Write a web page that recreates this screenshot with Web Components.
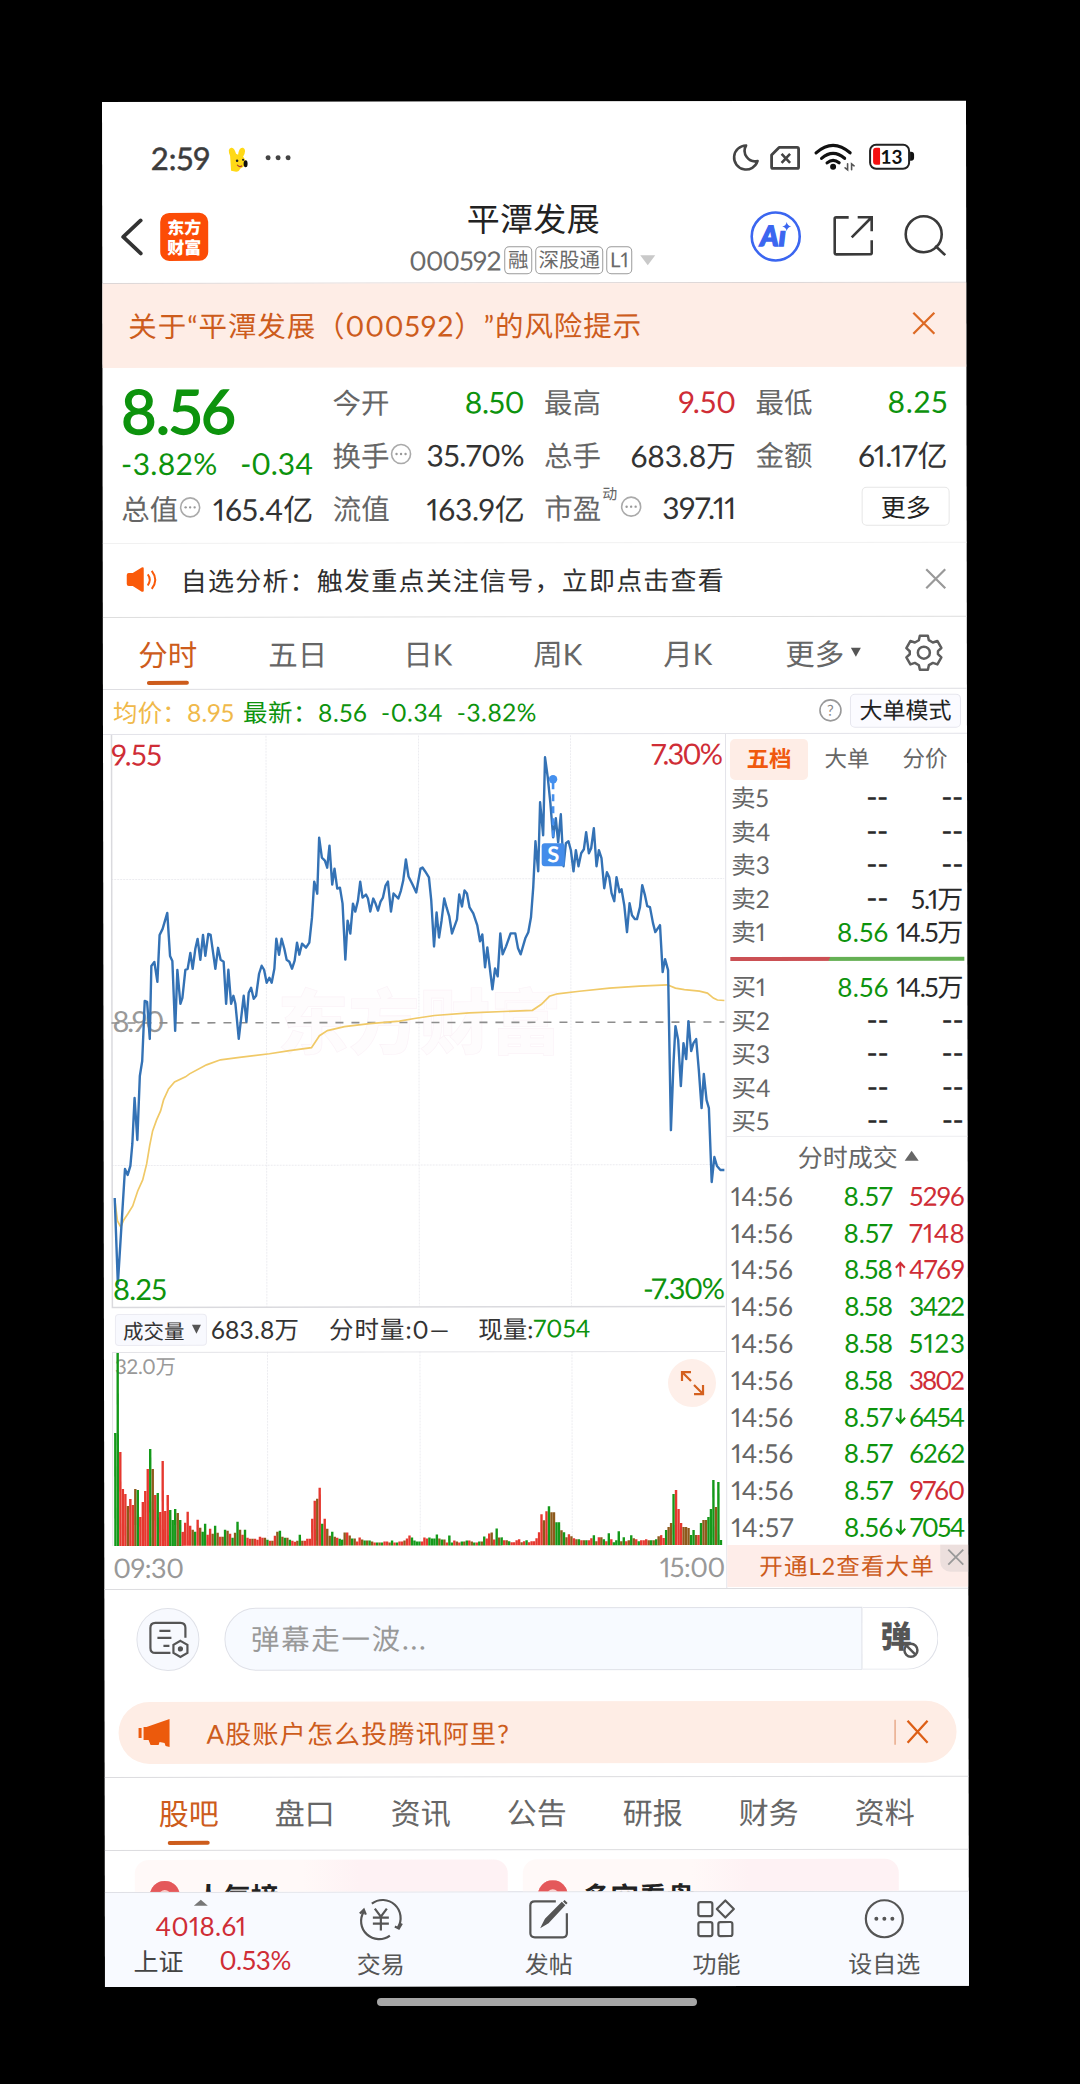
<!DOCTYPE html>
<html lang="zh-CN">
<head>
<meta charset="utf-8">
<title>平潭发展 000592</title>
<style>
  html, body {
    margin: 0;
    background: #000;
  }
  body {
    width: 1080px;
    height: 2084px;
    overflow: hidden;
    font-family: Lato, "Noto Sans CJK SC", sans-serif;
    font-variant-numeric: proportional-nums;
    text-spacing-trim: space-all;
    color: #333;
  }
</style>
</head>
<body>
<stock-app></stock-app>
<script>
// Text that spreads its letters over the width given in "w"
class FitText extends HTMLElement {

    constructor() {
      super();
      this.attachShadow({ mode: "open" });
      this.shadowRoot.innerHTML = /*html*/`
        <style>
          :host { display: inline-block; white-space: nowrap; flex: none; }
          span { display: inline-block; }
        </style>
        <span><slot></slot></span>
      `;
    }

    connectedCallback() {
      const w = Number(this.getAttribute('w'));
      const span = this.shadowRoot.querySelector('span');
      const n = this.textContent.length;
      if (!w || n < 2) return;
      const gap = (w - span.offsetWidth) / (n - 1);
      span.style.letterSpacing = gap + 'px';
      span.style.marginRight = -gap + 'px';
    }
}

// Base of the sections: paints styles and markup once
class Section extends HTMLElement {

    constructor() {
      super();
      this.attachShadow({ mode: "open" });
    }

    connectedCallback() {
      this.shadowRoot.innerHTML = `<style>
          :host { display: block; box-sizing: border-box; }
          * { box-sizing: border-box; }
          svg { display: block; flex: none; overflow: visible; }
          .up { color: #cf2d36; }
          .down { color: #0d930d; }
          ${this.constructor.styles}
        </style>${this.html()}`;
    }
}

class StatusBar extends Section {
    html() {
      return /*html*/`
        <fit-text class="time" w="59">2:59</fit-text>
        <svg class="pet" width="20" height="25" viewBox="0 0 20 25">
          <path d="M3 24 2 9Q-1 2 3 1q3-1 5 6l2 1q1-8 5-7 4 2 0 9 3 3 2 8-2 3-5 4-1 3-4 3z" fill="#ffd916"/>
          <ellipse cx="17.500" cy="17" rx="2" ry="3.500" fill="#111"/>
          <circle cx="9" cy="14" r="1.300" fill="#222"/><circle cx="15" cy="13" r="1.100" fill="#222"/>
          <path d="M9 18q2 3 5 1" fill="none" stroke="#b0392c" stroke-width="1.200"/>
        </svg>
        <svg width="26" height="6" viewBox="0 0 26 6" fill="#444"><circle cx="3" cy="3" r="2.500"/><circle cx="13" cy="3" r="2.500"/><circle cx="23" cy="3" r="2.500"/></svg>
        <i></i>
        <svg width="26" height="27" viewBox="0 0 26 27" fill="none" stroke="#444" stroke-width="2.600" stroke-linejoin="round"><path d="M13 1.500A12 12 0 1 0 24.500 17 10.500 10.500 0 0 1 13 1.500z"/></svg>
        <svg class="sim" width="30" height="24" viewBox="0 0 30 24" fill="none" stroke="#444" stroke-width="2.800" stroke-linejoin="round"><path d="M9 1.500h18q1.500 0 1.500 1.500v18q0 1.500-1.500 1.500H3q-1.500 0-1.500-1.500V9z"/><path d="m11.500 8 8.500 9m0-9-8.500 9" stroke-width="2.600"/></svg>
        <svg class="wifi" width="41" height="28" viewBox="0 0 41 28" fill="none" stroke="#111" stroke-width="3.200" stroke-linecap="round"><path d="M2 10Q19-5 36 10M7.500 15.500q11.500-10 23 0M13 20q6-5 12 0"/><circle cx="19" cy="24" r="3" fill="#111" stroke="none"/><path d="M33.500 21v6l-2.500-2M37.500 27v-6l2.500 2" stroke="#555" stroke-width="1.600"/></svg>
        <div class="battery"><b></b>13<u></u></div>
      `;
    }
    static styles = `
      :host { display: flex; align-items: center; height: 92px; padding: 20px 56px 0 49px; }
      .time { font-size: 31px; color: #3c3c3c; -webkit-text-stroke: .5px #3c3c3c; margin-top: -1px; }
      .pet { margin: 2px 17px 0 18px; }
      i { flex: 1; }
      .sim { margin: 2px 14px 0 11px; }
      .wifi { margin-right: 14px; }
      .battery { position: relative; width: 41px; height: 26px; border: 2.500px solid #222; border-radius: 7px; font: 700 19px/21px Lato; color: #111; text-align: center; padding-left: 4px; }
      .battery b { position: absolute; left: 2px; top: 2px; width: 7px; height: 17px; border-radius: 3px 1px 1px 3px; background: #f51010; }
      .battery u { position: absolute; right: -6px; top: 6px; width: 4px; height: 9px; border-radius: 0 3px 3px 0; background: #111; }
    `;
}

class NavBar extends Section {
    html() {
      return /*html*/`
        <div class="side">
          <svg width="24" height="38" viewBox="0 0 24 38" fill="none" stroke="#333" stroke-width="3.800" stroke-linecap="round" stroke-linejoin="round"><path d="M20.500 2.500 3 19l17.500 16.500"/></svg>
          <div class="logo">东方<br>财富</div>
        </div>
        <div class="title">
          <fit-text class="name" w="133">平潭发展</fit-text>
          <div class="sub">
            <fit-text w="92">000592</fit-text><em>融</em><em>深股通</em><em>L1</em>
            <svg width="15" height="10" viewBox="0 0 15 10"><path d="M0 0h15L7.500 10z" fill="#c9c9c9"/></svg>
          </div>
        </div>
        <div class="side right">
          <svg width="51" height="51" viewBox="0 0 51 51"><circle cx="25.500" cy="25.500" r="24" fill="none" stroke="#3b66f0" stroke-width="2.600"/><text x="10" y="35" font-family="Lato" font-weight="900" font-style="italic" font-size="28" fill="#3b66f0" stroke="#3b66f0" stroke-width="1.400">Aı</text><path d="M36.500 11q.8 4 4.500 4.500-3.700.8-4.500 4.500-.8-3.700-4.500-4.500 3.700-.5 4.500-4.500z" fill="#3b66f0"/></svg>
          <svg width="40" height="40" viewBox="0 0 40 40" fill="none" stroke="#3a3a3a" stroke-width="2.600"><path d="M15.500 1.500H3Q1.500 1.500 1.500 3v34q0 1.500 1.500 1.500h34q1.500 0 1.500-1.500V24.500M24.500 1.500h14v14M38 2 18.500 21.500"/></svg>
          <svg width="42" height="42" viewBox="0 0 42 42" fill="none" stroke="#3a3a3a" stroke-width="2.600"><circle cx="19.500" cy="19.500" r="18"/><path d="m31 31 10 9.500"/></svg>
        </div>
      `;
    }
    static styles = `
      :host { display: flex; height: 90px; border-bottom: 1px solid #dcd6d6; }
      .side { flex: 1; display: flex; align-items: center; padding: 0 0 3px 18px; gap: 16px; }
      .right { justify-content: flex-end; padding: 0 20px 3px 0; gap: 31.500px; }
      .logo { width: 48px; height: 48px; border-radius: 9px; background: #fc4c06; color: #fff; font: 900 17px/20px "Noto Sans CJK SC", sans-serif; text-align: center; padding-top: 4px; white-space: nowrap; }
      .title { flex: none; display: flex; flex-direction: column; align-items: center; }
      .name { font-size: 33px; line-height: 51px; color: #222; }
      .sub { display: flex; align-items: center; gap: 3px; height: 31px; font-size: 26.500px; color: #6a6a6a; padding: 0 4px 0 2px; }
      em { font-style: normal; font-size: 20.500px; line-height: 24px; height: 28px; border: 1.500px solid #9a9a9a; border-radius: 5px; padding: 0 2.500px; }
      .sub svg { margin-left: 5px; }
    `;
}

class RiskBanner extends Section {
    html() {
      return /*html*/`
        <fit-text w="513">${this.textContent}</fit-text>
        <svg width="23" height="23" viewBox="0 0 23 23" stroke="#dd6a25" stroke-width="2.300"><path d="m1 1 21 21M22 1 1 22"/></svg>
      `;
    }
    static styles = `
      :host { display: flex; align-items: center; justify-content: space-between; height: 84px; padding: 0 31px 3px 26px; background: #feede6; color: #cd5c1c; font-size: 28.500px; }
    `;
}

class QuotePanel extends Section {
    html() {
      const dots = /*html*/`<svg class="dots" width="21" height="21" viewBox="0 0 21 21"><circle cx="10.500" cy="10.500" r="9.500" fill="none" stroke="#aaa" stroke-width="1.600"/><g fill="#999"><circle cx="6" cy="10.500" r="1.200"/><circle cx="10.500" cy="10.500" r="1.200"/><circle cx="15" cy="10.500" r="1.200"/></g></svg>`;
      const cell = (label, value, w, cls = '', extra = '') => /*html*/`
        <div class="cell"><label>${label}</label>${extra}<fit-text class="${cls}" w="${w}">${value}</fit-text></div>`;
      return /*html*/`
        <div class="col">
          <fit-text class="price down" w="115">8.56</fit-text>
          <div class="change down"><fit-text w="96">-3.82%</fit-text><fit-text w="73">-0.34</fit-text></div>
          ${cell('总值', '165.4亿', 100, '', dots)}
        </div>
        <div class="col">
          ${cell('今开', '8.50', 60, 'down')}
          ${cell('换手', '35.70%', 98, '', dots)}
          ${cell('流值', '163.9亿', 98)}
        </div>
        <div class="col">
          ${cell('最高', '9.50', 58, 'up')}
          ${cell('总手', '683.8万', 106)}
          ${cell('市盈', '397.11', 74, '', '<sup>动</sup>' + dots)}
        </div>
        <div class="col">
          ${cell('最低', '8.25', 60, 'down')}
          ${cell('金额', '61.17亿', 89)}
          <div class="cell end"><button>更多</button></div>
        </div>
      `;
    }
    static styles = `
      :host { display: grid; grid-template-columns: repeat(4, 192px); gap: 19.500px; height: 176px; padding: 7px 0 0 18.500px; border-bottom: 1px solid #f1f1f1; }
      .col { display: flex; flex-direction: column; }
      .cell { display: flex; align-items: center; height: 53px; font-size: 30px; }
      .cell fit-text { margin-left: auto; }
      label { font-size: 28.500px; color: #666; }
      .price { font-size: 61px; line-height: 72px; height: 70px; -webkit-text-stroke: 1.500px #0d930d; }
      .change { display: flex; justify-content: space-between; align-items: center; height: 36px; font-size: 30px; }
      .dots { margin: 0 0 0 1px; }
      sup { font-size: 15px; line-height: 15px; color: #666; align-self: flex-start; margin: 6px 0 0 1px; }
      sup + .dots { margin-left: 3px; }
      .end { justify-content: flex-end; }
      button { width: 88px; height: 39px; margin-right: -2px; border: 1.500px solid #e6e6e6; border-radius: 5px; background: #fff; padding: 0; font: 25px/34px Lato, "Noto Sans CJK SC"; color: #222; }
    `;
}

class NoticeRow extends Section {
    html() {
      return /*html*/`
        <svg width="32" height="26" viewBox="0 0 32 26"><path d="M1 8q0-2 2-2h4l9-5.500q2-.8 2 1v22q0 2-2 1.200L7 19H3q-2 0-2-2z" fill="#fa5a0a"/><path d="M22 7.500q4 5 0 11M26 4q7 9 0 18" fill="none" stroke="#fa5a0a" stroke-width="2"/></svg>
        <fit-text w="543">自选分析：触发重点关注信号，立即点击查看</fit-text>
        <svg class="x" width="20" height="20" viewBox="0 0 20 20" stroke="#999" stroke-width="2.200"><path d="m.5.500 19 19M19.500.500l-19 19"/></svg>
      `;
    }
    static styles = `
      :host { display: flex; align-items: center; height: 74px; padding: 0 21px 1px 23px; border-bottom: 1.500px solid #dedede; font-size: 26px; color: #2e2e2e; }
      fit-text { margin: -2px 0 0 23px; }
      .x { margin-left: auto; }
    `;
}

class PeriodTabs extends Section {
    html() {
      return /*html*/`
        <span class="on">分时</span><span>五日</span><span>日K</span><span>周K</span><span>月K</span>
        <span class="more">更多<svg width="10" height="9" viewBox="0 0 10 9"><path d="M0 0h10L5 9z" fill="#555"/></svg></span>
        <svg class="gear" width="38" height="38" viewBox="0 0 38 38" fill="none" stroke="#5e5e5e" stroke-width="2.500" stroke-linejoin="round"><path d="M15 2h8l1 4.500 4 2.300 4.500-1.500 4 7-3.400 3.200v3l3.400 3.200-4 7L28 29.200l-4 2.300L23 36h-8l-1-4.500-4-2.300-4.500 1.500-4-7 3.400-3.200v-3L1.500 14.300l4-7L10 8.800l4-2.300z"/><circle cx="19" cy="19" r="6"/></svg>
      `;
    }
    static styles = `
      :host { display: flex; height: 72px; border-bottom: 1px solid #dedee2; font-size: 29.500px; color: #666; }
      span { flex: 0 0 130px; display: flex; justify-content: center; align-items: center; position: relative; padding-bottom: 1px; }
      .on { color: #cd5c1c; }
      .on::after { content: ""; position: absolute; bottom: 4px; left: 44px; width: 42px; height: 4px; border-radius: 2px; background: #cd5c1c; }
      .more { flex-basis: 140px; gap: 6px; }
      .gear { margin: 17px 0 0 12px; }
    `;
}

class PriceLegend extends Section {
    html() {
      return /*html*/`
        <fit-text class="avg" w="121">均价：8.95</fit-text>
        <fit-text class="down" w="293">最新：8.56&nbsp;&nbsp;-0.34&nbsp;&nbsp;-3.82%</fit-text>
        <svg width="23" height="23" viewBox="0 0 23 23"><circle cx="11.500" cy="11.500" r="10.500" fill="none" stroke="#999" stroke-width="1.600"/><text x="11.500" y="17" text-anchor="middle" font-size="15" fill="#888">?</text></svg>
        <div class="mode">大单模式</div>
      `;
    }
    static styles = `
      :host { display: flex; align-items: center; height: 45px; padding: 0 6px 1px 10px; border-bottom: 1px solid #e3e3e9; font-size: 24.500px; }
      .avg { color: #f0b94a; margin-right: 9px; }
      svg { margin-left: auto; }
      .mode { width: 111px; height: 34px; margin-left: 8px; border: 1.500px solid #e6e6ee; border-radius: 5px; background: #fbfbff; text-align: center; font-size: 23px; line-height: 30px; color: #222; }
    `;
}

const PRICE = `115,1197 118,1283 125.3,1168 128,1174 130.7,1165 132.7,1143 135,1097 137.7,1139 140.3,1075 142.7,1060 145.3,1000 147.7,1001 150.3,1038
  152,965 155,961 158,981 160.3,934 163.3,928 168,912 170.7,955 173,960 175.7,1030 178,969 181,1003 183,997 186,969 188.3,968 191,952 193.3,968 196,948
  198.3,938 201,959 203.7,934 206,955 209,933 211.3,934 216,968 218.7,947 221.3,959 224.3,961 226.7,1003 229,969 231.7,1003 234,995 236,1003 239.3,1038
  244.3,995 247,1021 249.3,992 251.7,987 254.3,998 256.7,995 259.7,973 262.3,965 264.7,969 267.3,982 270,977 272.3,982 275,968 277,938 279.7,954 282.3,938
  285,948 287.3,959 290,961 292.7,968 295.3,960 297.7,942 300,954 302.7,943 306.7,947 310,942 312.7,917 315,881 318,893 320,837 322.7,857 325.7,860
  328,867 330.3,845 333,884 335.3,868 338,888 340.7,887 343.3,903 346,959 348.3,920 351,933 353.7,903 356,911 358.7,900 361,881 363.3,897 366.7,894
  368.7,898 371,911 374,898 376.3,903 378.7,910 381.3,901 383.7,897 386.3,885 388.7,881 391.7,911 394.3,893 399,898 401.7,890 404,880 406.7,859 409.3,876
  413.3,884 417,892 421.3,868 423.3,867 426,871 429.7,877 432,900 434.7,946 437.3,912 439.7,937 442.3,920 445,898 447.3,907 450,916 452.7,933 457.7,919
  460,894 462.7,906 465.3,890 467.7,893 470.3,907 474,913 478,925 480.7,941 483,934 485.7,967 488,947 493,989 495.7,968 498.3,976 501,933 503.3,954
  506.7,946 511.3,933 516,933 518.7,948 521.3,954 526,938 529,932 531.7,917 534,887 536.3,841 539,871 541,802 544,835 546,757 548.7,777 551.3,803
  554,837 556.7,818 559,842 561.7,814 564.3,866 566.7,843 569.3,841 571.7,850 574.3,871 576.7,850 579.3,866 582,853 584.7,849 587,832 589.7,853 592,848
  594.7,828 597.3,866 599.7,850 602.3,858 605,888 607.7,872 610,877 612.3,893 615,901 617.3,877 620.3,892 622.3,889 625,905 627.7,932 630.3,903 632.7,915
  635.7,919 637.7,919 640.7,907 643,885 645.7,895 648,906 650.7,907 653.7,923 656,932 660.7,925 663.3,972 665.7,959 668.7,970 671.3,1130 674,1063
  676,1026 678.7,1040 681.3,1086 684,1043 686.7,1059 689,1021 691.7,1051 694,1043 696.7,1039 699.3,1070 702,1108 704.3,1074 707,1100 709.3,1108
  712,1182 714.7,1157 717.3,1166 720.7,1170 724.7,1170`;

const AVERAGE = `115,1198 117.7,1220 121,1226 124,1219 128,1213 133,1205 138,1190 143,1179 147,1163 150,1145 153,1130 157,1119 161,1110 164,1099 169,1088 175,1081
  186,1076 190,1073 207,1064 221,1059 240,1056.5 270,1053 290,1050 312,1047 316,1041 320,1035 328,1030 345,1026 370,1023 400,1020.5 415,1018 435,1015 470,1012.5
  533,1010 542,1004 550,996 558,993.5 580,991 610,988 640,986 668,984.7 676,988 685,989.5 700,991 708,993 714,998 718,1000 725,1000.5`;

class PriceChart extends Section {
    html() {
      return /*html*/`
        <svg width="614" height="573" viewBox="112 734 614 573">
          <g fill="none" stroke="#ececf0" stroke-width="1">
            <path d="M267 735v571M419.500 735v571M571.500 735v571M112 878.500h613M112 1164.500h613" stroke-dasharray="2 1"/>
            <path d="M112.500 734v572.500H725" stroke="#dadade" stroke-width="1.500"/>
          </g>
          <text x="278" y="1048" font-size="71" font-weight="900" textLength="284" fill="#fefcfd" stroke="#fbf3f8" stroke-width=".7">东方财富</text>
          <text x="113" y="1031" font-size="29" textLength="52" fill="#999">8.90</text>
          <path d="M112 1022H725" stroke="#8d8d8d" stroke-width="1.600" stroke-dasharray="8 8"/>
          <polyline points="${AVERAGE}" fill="none" stroke="#f0c967" stroke-width="1.700"/>
          <polyline points="${PRICE}" fill="none" stroke="#3472b5" stroke-width="2.400" stroke-linejoin="round"/>
          <path d="M554 782v60" stroke="#4590ee" stroke-width="2.600" stroke-dasharray="7 5"/>
          <circle cx="554" cy="779" r="4.200" fill="#4590ee"/>
          <rect x="542.500" y="843" width="23" height="23" rx="3" fill="#438cea"/>
          <text x="554" y="862" font-size="22" font-weight="700" text-anchor="middle" fill="#fff">S</text>
          <g font-size="29">
            <text x="112" y="764.500" textLength="51" class="r">9.55</text>
            <text x="652" y="764.500" textLength="72" class="r">7.30%</text>
            <text x="113" y="1299" textLength="54" class="g">8.25</text>
            <text x="643" y="1299" textLength="82" class="g">-7.30%</text>
          </g>
        </svg>
      `;
    }
    static styles = `
      :host { height: 573px; }
      .r { fill: #cf2d36; }
      .g { fill: #0d930d; }
    `;
}

// height and colour of each minute: r up, g down, b both
const VOLUME = `113g 193g 94r 57r 52r 40b 47r 41r 57b 56g 29r 44r 55r 77r 97g 77b 51r 53g 34r 85r 35r 51r 36g 26g 37g 33b 26g 14r 23r 34r 20r 16b 14g 26r 18b 14g 22g 11r 17r 12b
  20g 13b 9r 9b 16g 15b 12r 8g 13b 24g 16b 11r 16g 8r 7r 7b 7r 6r 9r 8r 8b 6g 5r 5b 10r 14b 15g 9b 8g 8b 6g 5r 4r 5b 11g 5b 5r 7r 7r
  27r 45r 47b 58r 22g 27r 17b 10b 14g 9b 8r 7g 6g 13b 13r 10b 7g 7b 4r 8r 6b 5g 5b 5g 4b 3r 3g 3b 3g 4r 4r 3b 5g 3r 3g 4r 4r 5b 7r 10r 8g
  5g 4g 4g 4r 8r 7r 8g 7g 7g 11g 7b 6g 6b 3r 10g 3g 5r 4b 3r 4g 4b 5g 5r 4b 3g 3r 4g 4b 9g 7r 12r 13b 6r 17g 8b 8g 5r 5b 4g 3r 3r 5r 6r 3b 4r 5g
  3r 4r 4r 7r 13r 31r 25b 34r 39g 33b 33b 23g 23g 15b 13g 8b 11r 9b 7r 6b 6g 5r 5b 5g 5r 7r 10g 4b 8r 8b 6g 4r 12g 6r 3g 5g
  14g 4b 8g 4r 5b 10g 7b 6r 4g 5r 5r 6r 5b 5g 5b 6g 9b 10r 7r 15g 18b 22b 51g 55r 36r 22r 18b 18b 17b 10g 15g 10b 10r 22g 25b 25b 28g 36g 65g 38b 63g 5g`;

class VolumeChart extends Section {
    html() {
      const colors = { r: '#e5382f', g: '#14991a', b: '#8e5a1c' };
      const list = VOLUME.split(/\s+/);
      const step = 608 / list.length;
      const bars = list.map((v, i) => {
        const h = parseInt(v);
        return `<rect x="${(114 + i * step).toFixed(2)}" y="${1545 - h}" width="${(step - .1).toFixed(2)}" height="${h}" fill="${colors[v.at(-1)]}"/>`;
      }).join('');
      return /*html*/`
        <div class="head">
          <div class="kind">成交量<svg width="9" height="9" viewBox="0 0 9 9"><path d="M0 0h9L4.500 9z" fill="#555"/></svg></div>
          <fit-text w="88">683.8万</fit-text>
          <fit-text class="b" w="120">分时量:0—</fit-text>
          <fit-text class="c" w="55">现量:</fit-text><fit-text class="down" w="57">7054</fit-text>
        </div>
        <svg width="614" height="194" viewBox="112 1351 614 194">
          <path d="M267.500 1351v194M420 1351v194M572 1351v194" stroke="#ececf0" stroke-dasharray="2 1"/>
          <path d="M112.500 1545V1351.500H725" fill="none" stroke="#e4e4e8"/>
          <text x="115" y="1373" font-size="20.500" textLength="61" fill="#999">32.0万</text>
          ${bars}
          <circle cx="692" cy="1383" r="24" fill="#feefe9"/>
          <path d="m691 1381-9-9m0 9v-9h9M694 1385l9 9m0-9v9h-9" fill="none" stroke="#d4601e" stroke-width="2.200"/>
        </svg>
        <div class="times"><fit-text w="71">09:30</fit-text><fit-text w="66">15:00</fit-text></div>
      `;
    }
    static styles = `
      .head { display: flex; align-items: center; height: 44px; padding-bottom: 3px; font-size: 24.500px; color: #333; }
      .kind { display: flex; align-items: center; gap: 7px; width: 92px; height: 32px; margin: 2px 4px 0 3px; padding-left: 7px; border: 1px solid #ebebf2; border-radius: 4px; background: #f8f9fe; font-size: 20.500px; }
      .b { margin-left: 30px; }
      .c { margin-left: 29px; }
      .times { display: flex; justify-content: space-between; align-items: center; height: 43px; padding: 0 1px 0 1px; font-size: 27px; color: #999; }
    `;
}

class OrderBook extends Section {
    html() {
      const value = (v, w) => v === '--' ? '<fit-text class="none" w="22">--</fit-text>' : `<fit-text w="${w}">${v}</fit-text>`;
      const row = (name, price, vol) => /*html*/`
        <div class="row"><span>${name}</span>
          <b class="${price === '--' ? '' : 'down'}">${value(price, 51)}</b>
          <b>${value(vol, vol.length > 4 ? 67 : 52)}</b></div>`;
      return /*html*/`
        <div class="tabs"><span class="on">五档</span><span>大单</span><span>分价</span></div>
        ${row('卖5', '--', '--')}${row('卖4', '--', '--')}${row('卖3', '--', '--')}${row('卖2', '--', '5.1万')}${row('卖1', '8.56', '14.5万')}
        <div class="ratio"></div>
        ${row('买1', '8.56', '14.5万')}${row('买2', '--', '--')}${row('买3', '--', '--')}${row('买4', '--', '--')}${row('买5', '--', '--')}
      `;
    }
    static styles = `
      :host { height: 403px; padding: 5px 3px 0 4px; border-bottom: 1px solid #ededf0; font-size: 26px; }
      .tabs { display: flex; height: 41px; font-size: 22.500px; line-height: 40px; color: #666; text-align: center; }
      .tabs span { flex: 1; }
      .tabs .on { background: #feede6; color: #f0590e; font-weight: 700; border-radius: 5px; }
      .row { display: grid; grid-template-columns: 1fr 72px 75px; align-items: center; height: 33.600px; line-height: 32px; padding: 2px 1px 0 1px; }
      .row span { color: #666; font-size: 24.500px; }
      .row b { font-weight: 400; text-align: right; }
      .row b:not(.down) { color: #2a2a2a; }
      .none { font-family: "DejaVu Sans"; font-size: 30px; line-height: 30px; position: relative; top: -1px; }
      .ratio { height: 4px; margin: 9px 0 8px; background: linear-gradient(115deg, #cb5054 42.200%, #65b054 42.600%); }
    `;
}

class TradeList extends Section {
    html() {
      const rows = [
        ['14:56', '8.57', '', '5296', 'up'],
        ['14:56', '8.57', '', '7148', 'up'],
        ['14:56', '8.58', 'up', '4769', 'up'],
        ['14:56', '8.58', '', '3422', 'down'],
        ['14:56', '8.58', '', '5123', 'down'],
        ['14:56', '8.58', '', '3802', 'up'],
        ['14:56', '8.57', 'down', '6454', 'down'],
        ['14:56', '8.57', '', '6262', 'down'],
        ['14:56', '8.57', '', '9760', 'up'],
        ['14:57', '8.56', 'down', '7054', 'down']
      ];
      const arrow = dir => dir ? `<svg class="${dir}" width="11" height="17" viewBox="0 0 11 17" fill="none" stroke="currentColor" stroke-width="2"><path d="${dir === 'up' ? 'M5.500 16V2M1 7l4.500-5L10 7' : 'M5.500 1v14M1 10l4.500 5 4.500-5'}"/></svg>` : '';
      return /*html*/`
        <div class="head">分时成交<svg width="14" height="10" viewBox="0 0 14 10"><path d="M0 10h14L7 0z" fill="#666"/></svg></div>
        ${rows.map(([time, price, dir, vol, cls]) => /*html*/`
          <div class="row"><fit-text w="62">${time}</fit-text><b class="down"><fit-text w="49">${price}</fit-text></b><i>${arrow(dir)}</i><b class="${cls}"><fit-text w="56">${vol}</fit-text></b></div>`).join('')}
        <div class="open"><fit-text w="174">开通L2查看大单</fit-text>
          <u><svg width="15" height="15" viewBox="0 0 15 15" stroke="#999" stroke-width="1.800"><path d="m0 0 15 15M15 0 0 15"/></svg></u></div>
      `;
    }
    static styles = `
      .head { display: flex; align-items: center; justify-content: center; gap: 7px; height: 40px; padding: 0 0 2px 22px; font-size: 25px; color: #666; }
      .row { display: grid; grid-template-columns: 1fr 50px 15px 57px; align-items: center; height: 36.800px; padding: 1px 3px 0 4px; font-size: 26px; color: #666; }
      .row b { font-weight: 400; text-align: right; }
      i { display: flex; justify-content: center; }
      .open { position: relative; height: 42px; line-height: 42px; padding-left: 32px; background: #feede9; color: #cd5c1c; font-size: 23.500px; }
      u { position: absolute; right: 0; top: 0; width: 28px; height: 27px; border-radius: 0 0 0 10px; background: #ecdfdd; padding: 5px 0 0 8px; }
    `;
}

class DanmuBar extends Section {
    html() {
      return /*html*/`
        <div class="round"><svg width="40" height="36" viewBox="0 0 40 36" fill="none" stroke="#555" stroke-width="2.200"><path d="M21 31H6q-5 0-5-5V6q0-5 5-5h25q5 0 5 5v10M10 9h11M8 16h14M14 24h6"/><path d="m31 19 7 4v8l-7 4-7-4v-8z"/><circle cx="31" cy="27" r="1.500" fill="#555"/></svg></div>
        <div class="input"><fit-text w="175">弹幕走一波...</fit-text></div>
        <div class="btn">弹<svg width="17" height="17" viewBox="0 0 17 17" fill="#fff" stroke="#555" stroke-width="2.500"><circle cx="8.500" cy="8.500" r="6.500"/><path d="m4 4 9 9"/></svg></div>
      `;
    }
    static styles = `
      :host { display: flex; height: 113px; padding: 18px 30px 0 31.500px; border-top: 1.500px solid #dcdcdf; }
      .round { width: 63px; height: 63px; border: 1.500px solid #dfe1e8; border-radius: 50%; background: #f7f9fe; display: flex; align-items: center; padding-left: 12px; }
      .input { flex: 1; height: 63px; margin-left: 25px; padding-left: 26px; border: 1.500px solid #dfe1e8; border-radius: 32px 0 0 32px; background: #f7faff; font-size: 28.500px; line-height: 60px; color: #999; }
      .btn { position: relative; width: 76px; height: 63px; border: 1.500px solid #dfe1e8; border-left: 0; border-radius: 0 32px 32px 0; font-size: 31px; line-height: 56px; font-weight: 900; color: #555; padding-left: 18px; }
      .btn svg { position: absolute; left: 40px; top: 34px; }
    `;
}

class PromoBar extends Section {
    html() {
      return /*html*/`
        <svg width="33" height="28" viewBox="0 0 33 28" fill="#ec5a0c"><path d="M0 9h3v10H0zM5 8h3L31 0v28l-4-1-1-3-5-1-1 3h-8l-2-5H5z"/></svg>
        <fit-text w="302">A股账户怎么投腾讯阿里?</fit-text>
        <i></i>
        <svg width="22" height="22" viewBox="0 0 22 22" stroke="#dd5f16" stroke-width="2.300"><path d="m1 0 20 22M21 0 1 22"/></svg>
      `;
    }
    static styles = `
      :host { display: flex; align-items: center; height: 62px; margin: 0 12px 0 14px; padding: 0 28px 0 20px; border-radius: 31px; background: #feede5; color: #cd5c1c; font-size: 26px; }
      fit-text { margin: -2px 0 0 35px; }
      i { margin: 0 11px 0 auto; width: 1.500px; height: 25px; background: #dd8a5e; }
    `;
}

class InfoTabs extends Section {
    html() {
      const names = ['股吧', '盘口', '资讯', '公告', '研报', '财务', '资料'];
      return names.map((n, i) => `<span class="${i ? '' : 'on'}">${n}</span>`).join('');
    }
    static styles = `
      :host { display: grid; grid-template-columns: repeat(7, 1fr); margin-top: 13px; height: 74px; padding: 0 26px; border: solid #dcdcdf; border-width: 1.500px 0; font-size: 30px; line-height: 71px; color: #666; text-align: center; }
      span { position: relative; }
      .on { color: #cd5c1c; }
      .on::after { content: ""; position: absolute; left: 50%; bottom: 5px; width: 42px; height: 4px; margin-left: -21px; border-radius: 2px; background: #cd5c1c; }
    `;
}

class FeedCards extends Section {
    html() {
      return /*html*/`
        <div class="card"><b></b>人气榜<em>›</em></div>
        <div class="card"><b></b>多空看盘</div>
      `;
    }
    static styles = `
      :host { display: grid; grid-template-columns: 373px 376px; gap: 15px; height: 41px; padding: 9px 0 0 30px; overflow: hidden; }
      .card { height: 72px; border-radius: 14px; background: linear-gradient(90deg, #fff9f8 45%, #fef2f4 60%); display: flex; align-items: center; padding-left: 15px; font-size: 28px; font-weight: 700; color: #222; }
      b { width: 30px; height: 30px; margin-right: 15px; border-radius: 50%; background: #e4585a; box-shadow: inset 0 0 0 9px #e4585a, inset 0 0 0 20px #fbd5d2; }
      em { font-style: normal; font-weight: 400; margin-left: 10px; color: #888; }
    `;
}

class BottomNav extends Section {
    html() {
      return /*html*/`
        <div class="index">
          <svg width="14" height="6" viewBox="0 0 14 6"><path d="M0 6h14L7 0z" fill="#777"/></svg>
          <fit-text class="up" w="91">4018.61</fit-text>
          <div><label>上证</label><fit-text class="up" w="72">0.53%</fit-text></div>
        </div>
        <div class="item"><svg width="44" height="40" viewBox="0 0 44 40"><path d="M13 4A18 18 0 0 1 39 28M31 36A18 18 0 0 1 5 12M1 14l4-4 2 5M36 27l4 2 3-5"/><path d="m16 9 6 8 6-8M14 18h16M14 24h16M22 17v14"/></svg>交易</div>
        <div class="item"><svg width="40" height="40" viewBox="0 0 40 40"><path d="M27 2H6Q1.500 2 1.500 6v28q0 4 4.500 4h28q4 0 4-4V14"/><path d="m14 26 3-6L33 4l2 2-16 17zM35 1.500l3 3" fill="#555"/></svg>发帖</div>
        <div class="item"><svg width="38" height="38" viewBox="0 0 38 38"><rect x="1.500" y="2" width="14" height="14" rx="2"/><path d="m28.500.500 8.500 8.500-8.500 8.500L20 9z" stroke-linejoin="round"/><rect x="1.500" y="22" width="14" height="14" rx="2"/><rect x="21.500" y="22" width="14" height="14" rx="2"/></svg>功能</div>
        <div class="item"><svg width="39" height="39" viewBox="0 0 39 39"><circle cx="19.500" cy="19.500" r="18.500"/><g fill="#555" stroke="none"><circle cx="11.500" cy="19.500" r="2"/><circle cx="19.500" cy="19.500" r="2"/><circle cx="27.500" cy="19.500" r="2"/></g></svg>设自选</div>
      `;
    }
    static styles = `
      :host { display: grid; grid-template-columns: 192px repeat(4, 167.800px); height: 96px; background: #f8faff; border-top: 1px solid #dfe0e6; font-size: 24px; color: #555; }
      .index { display: flex; flex-direction: column; align-items: center; font-size: 26px; padding-top: 7px; }
      .index > fit-text { line-height: 32px; margin-top: 4px; }
      .index div { display: flex; align-items: center; gap: 36px; height: 36px; padding-left: 23px; }
      label { font-size: 25px; color: #444; }
      .item { display: flex; flex-direction: column; align-items: center; padding-top: 7px; line-height: 50px; }
      .item svg { height: 40px; fill: none; stroke: #555; stroke-width: 2.200; }
    `;
}

class StockApp extends Section {
    html() {
      return /*html*/`
        <main>
          <status-bar></status-bar>
          <nav-bar></nav-bar>
          <risk-banner>关于“平潭发展（000592）”的风险提示</risk-banner>
          <quote-panel></quote-panel>
          <notice-row></notice-row>
          <period-tabs></period-tabs>
          <price-legend></price-legend>
          <div class="market">
            <div class="charts"><price-chart></price-chart><volume-chart></volume-chart></div>
            <div class="book"><order-book></order-book><trade-list></trade-list></div>
          </div>
          <danmu-bar></danmu-bar>
          <promo-bar></promo-bar>
          <info-tabs></info-tabs>
          <feed-cards></feed-cards>
          <bottom-nav></bottom-nav>
        </main>
        <div class="home"></div>
      `;
    }
    static styles = `
      :host { padding: 102px 0 0 102px; }
      main { width: 864px; height: 1885px; overflow: hidden; background: #fff; transform: rotate(-.09deg); transform-origin: 0 0; }
      .market { display: flex; height: 854px; }
      .charts { width: 622px; padding-left: 8px; flex: none; }
      .book { flex: 1; border-left: 1.500px solid #e3e3e9; }
      .home { width: 320px; height: 8px; margin: 11px 0 0 275px; border-radius: 4px; background: #a6a6a6; }
    `;
}

customElements.define("fit-text", FitText);
customElements.define("status-bar", StatusBar);
customElements.define("nav-bar", NavBar);
customElements.define("risk-banner", RiskBanner);
customElements.define("quote-panel", QuotePanel);
customElements.define("notice-row", NoticeRow);
customElements.define("period-tabs", PeriodTabs);
customElements.define("price-legend", PriceLegend);
customElements.define("price-chart", PriceChart);
customElements.define("volume-chart", VolumeChart);
customElements.define("order-book", OrderBook);
customElements.define("trade-list", TradeList);
customElements.define("danmu-bar", DanmuBar);
customElements.define("promo-bar", PromoBar);
customElements.define("info-tabs", InfoTabs);
customElements.define("feed-cards", FeedCards);
customElements.define("bottom-nav", BottomNav);
customElements.define("stock-app", StockApp);
</script>
</body>
</html>
